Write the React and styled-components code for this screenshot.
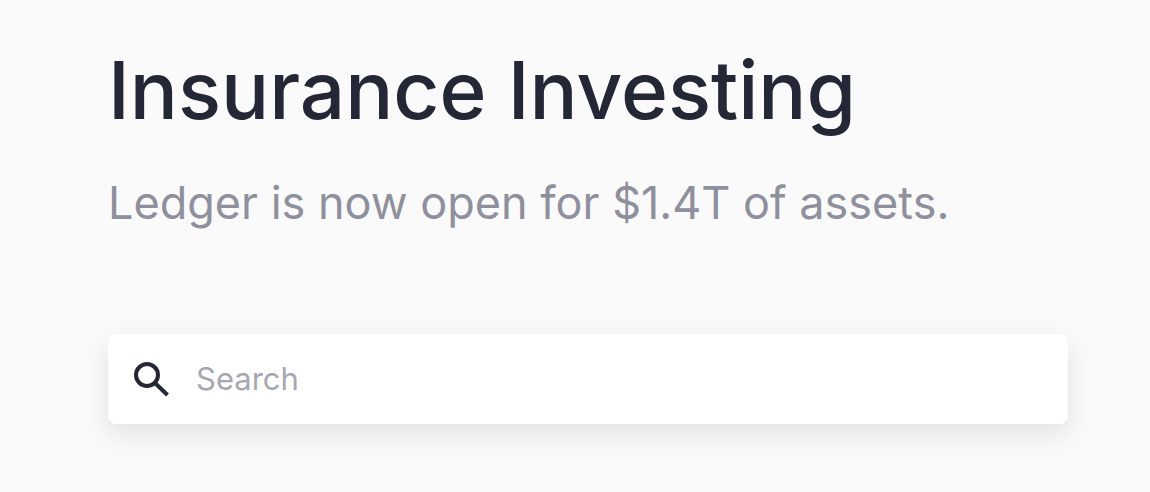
import { useState } from "react";
import styled, { createGlobalStyle } from "styled-components";

const GlobalStyle = createGlobalStyle`
  * {
    box-sizing: border-box;
  }

  body {
    margin: 0;
    background: #fafafa;
    font-family: Inter, "Liberation Sans", sans-serif;
  }
`

const Page = styled.main`
  padding: 38px 82px 68px 108px;
`

const Title = styled.h1`
  margin: 0;
  color: #232736;
  font-size: 80px;
  font-weight: 500;
  line-height: 104px;
`

const Subtitle = styled.p`
  margin: 30px 0 100px;
  color: #8f909e;
  font-size: 45px;
  line-height: 62px;
`

const SearchForm = styled.form`
  display: flex;
  align-items: center;
  gap: 24px;
  height: 90px;
  padding: 0 24px;
  border-radius: 8px;
  background: #fff;
  box-shadow: 0 10px 28px rgba(0, 0, 0, 0.1);
`

const SearchLabel = styled.label`
  display: flex;
  color: #232736;
`

const SearchInput = styled.input`
  flex: 1;
  min-width: 0;
  padding: 0;
  border: 0;
  outline: 0;
  background: transparent;
  color: #232736;
  font-family: inherit;
  font-size: 31px;
  line-height: 40px;

  &::placeholder {
    color: #a6a8b1;
    opacity: 1;
  }
`

function SearchIcon() {
    return (
        <svg width="40" height="40" viewBox="0 0 40 40" fill="none" stroke="currentColor" strokeWidth="4" aria-hidden="true">
            <circle cx="15" cy="16" r="11"/>
            <path d="M23.5 24.5L35.5 36"/>
        </svg>
    );
}

function App() {
    const [query, setQuery] = useState("");

    return (
        <Page>
            <GlobalStyle/>
            <Title>Insurance Investing</Title>
            <Subtitle>Ledger is now open for $1.4T of assets.</Subtitle>
            <SearchForm role="search" onSubmit={(e) => e.preventDefault()}>
                <SearchLabel htmlFor="search" aria-label="Search">
                    <SearchIcon/>
                </SearchLabel>
                <SearchInput id="search" placeholder="Search" value={query} onChange={(e) => setQuery(e.target.value)}/>
            </SearchForm>
        </Page>
    );
}

export default App;
